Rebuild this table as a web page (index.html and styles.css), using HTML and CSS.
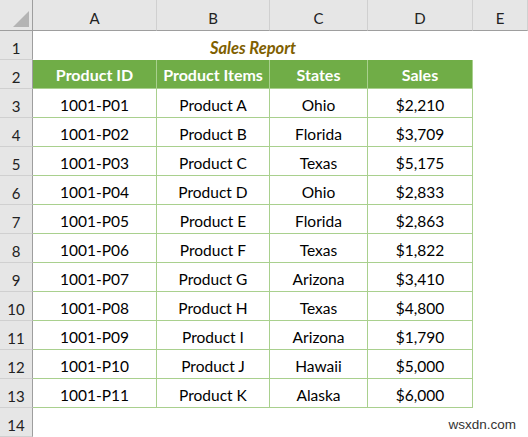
FILE: index.html
```html
<!DOCTYPE html>
<html lang="en">
<head>
    <meta charset="UTF-8">
    <title>Sales Report</title>
    <link rel="stylesheet" href="styles.css">
</head>
<body>

<div class="sheet">
    <div class="ch corner"><span class="tri"></span></div>
    <div class="ch">A</div>
    <div class="ch">B</div>
    <div class="ch">C</div>
    <div class="ch">D</div>
    <div class="ch">E</div>

    <div class="rh">1</div>
    <div class="title">Sales Report</div>
    <div class="cell"></div>

    <div class="rh">2</div>
    <div class="hd">Product ID</div>
    <div class="hd">Product Items</div>
    <div class="hd">States</div>
    <div class="hd">Sales</div>
    <div class="cell"></div>

    <div class="rh">3</div><div class="td">1001-P01</div><div class="td">Product A</div><div class="td">Ohio</div><div class="td">$2,210</div><div class="cell"></div>
    <div class="rh">4</div><div class="td">1001-P02</div><div class="td">Product B</div><div class="td">Florida</div><div class="td">$3,709</div><div class="cell"></div>
    <div class="rh">5</div><div class="td">1001-P03</div><div class="td">Product C</div><div class="td">Texas</div><div class="td">$5,175</div><div class="cell"></div>
    <div class="rh">6</div><div class="td">1001-P04</div><div class="td">Product D</div><div class="td">Ohio</div><div class="td">$2,833</div><div class="cell"></div>
    <div class="rh">7</div><div class="td">1001-P05</div><div class="td">Product E</div><div class="td">Florida</div><div class="td">$2,863</div><div class="cell"></div>
    <div class="rh">8</div><div class="td">1001-P06</div><div class="td">Product F</div><div class="td">Texas</div><div class="td">$1,822</div><div class="cell"></div>
    <div class="rh">9</div><div class="td">1001-P07</div><div class="td">Product G</div><div class="td">Arizona</div><div class="td">$3,410</div><div class="cell"></div>
    <div class="rh">10</div><div class="td">1001-P08</div><div class="td">Product H</div><div class="td">Texas</div><div class="td">$4,800</div><div class="cell"></div>
    <div class="rh">11</div><div class="td">1001-P09</div><div class="td">Product I</div><div class="td">Arizona</div><div class="td">$1,790</div><div class="cell"></div>
    <div class="rh">12</div><div class="td">1001-P10</div><div class="td">Product J</div><div class="td">Hawaii</div><div class="td">$5,000</div><div class="cell"></div>
    <div class="rh">13</div><div class="td">1001-P11</div><div class="td">Product K</div><div class="td">Alaska</div><div class="td">$6,000</div><div class="cell"></div>

    <div class="rh">14</div>
    <div class="cell wide"></div>
    <div class="cell mark">wsxdn.com</div>
</div>

</body>
</html>
```

FILE: styles.css
```css
body {
    margin: 0;
    background: #fff;
    font-family: Lato, "Open Sans", sans-serif;
    font-size: 15px;
    color: #000;
    overflow: hidden;
}

.sheet {
    display: grid;
    grid-template-columns: 33px 124px 113px 98px 105px 55px;
    grid-template-rows: 31px;
    grid-auto-rows: 29px;
    width: 528px;
}

.sheet > div {
    box-sizing: border-box;
    display: flex;
    align-items: center;
    justify-content: center;
    white-space: nowrap;
}

.ch {
    background: #e6e6e6;
    color: #222;
    padding-top: 6px;
    border-right: 1px solid #d0d0d0;
    border-bottom: 1px solid #9e9e9e;
}

.ch.corner {
    position: relative;
    border-right: 1px solid #9e9e9e;
}

.tri {
    position: absolute;
    right: 3px;
    bottom: 3px;
    width: 0;
    height: 0;
    border-left: 16px solid transparent;
    border-bottom: 16px solid #b4b4b4;
}

.rh {
    background: #e6e6e6;
    color: #222;
    padding-top: 6px;
    border-right: 1px solid #9e9e9e;
    border-bottom: 1px solid #d0d0d0;
}

.title {
    grid-column: span 4;
    font-weight: bold;
    font-style: italic;
    font-size: 16.5px;
    color: #7f6000;
    padding-top: 5px;
}

.hd {
    background: #70ad47;
    color: #fff;
    font-weight: bold;
    font-size: 16px;
    border-right: 1px solid #a9d08e;
    border-bottom: 1px solid #a9d08e;
}

.td {
    font-size: 15.5px;
    padding-top: 3px;
    border-right: 1px solid #a9d08e;
    border-bottom: 1px solid #a9d08e;
}

.wide {
    grid-column: span 4;
}

.sheet > .mark {
    justify-content: flex-end;
    font-family: "Liberation Sans", Arial, sans-serif;
    font-size: 13.5px;
    color: #333;
    margin-left: -40px;
    padding-right: 12px;
    padding-top: 4px;
}
```
